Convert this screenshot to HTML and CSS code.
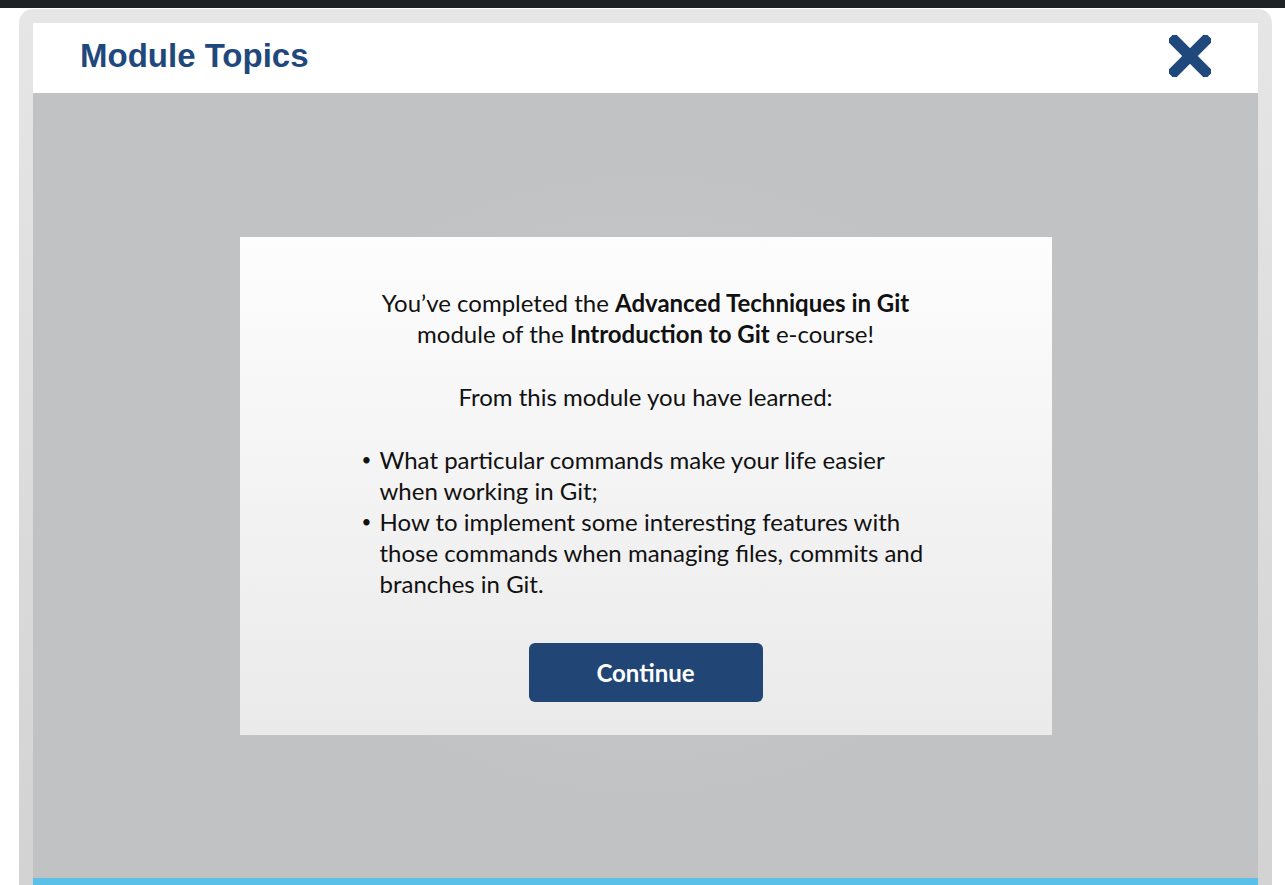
FILE: index.html
```html
<!DOCTYPE html>
<html>
<head>
<meta charset="utf-8">
<link rel="stylesheet" href="styles.css">
</head>
<body>
<div class="topbar"></div>
<div class="frame">
  <div class="panel">
    <header class="header">
      <h1 class="title">Module Topics</h1>
      <button class="close" aria-label="Close">
        <svg width="42" height="42" viewBox="0 0 44 44">
          <rect x="-6.5" y="16.2" width="57" height="11.6" rx="2.5" fill="#1f497d" transform="rotate(45 22 22)"/>
          <rect x="-6.5" y="16.2" width="57" height="11.6" rx="2.5" fill="#1f497d" transform="rotate(-45 22 22)"/>
        </svg>
      </button>
    </header>
    <main class="stage">
      <section class="dialog">
        <p class="lead">You’ve completed the <b>Advanced Techniques in Git</b><br>module of the <b>Introduction to Git</b> e-course!</p>
        <p class="lead">From this module you have learned:</p>
        <ul class="list">
          <li>What particular commands make your life easier when working in Git;</li>
          <li>How to implement some interesting features with those commands when managing files, commits and branches in Git.</li>
        </ul>
        <button class="continue">Continue</button>
      </section>
    </main>
    <div class="bottombar"></div>
  </div>
</div>
</body>
</html>
```
FILE: styles.css
```css
html, body {
  margin: 0;
  padding: 0;
  background: #ffffff;
  overflow: hidden;
  height: 885px;
}
.topbar {
  height: 8px;
  background: #202124;
}
.frame {
  margin: 1px 13px 0 19px;
  padding: 14px 14px 0 14px;
  border-radius: 14px 14px 0 0;
  background: linear-gradient(#e6e6e6, #d2d2d2);
  height: 900px;
  box-sizing: border-box;
}
.panel {
  display: flex;
  flex-direction: column;
}
.header {
  height: 70px;
  background: #ffffff;
  display: flex;
  align-items: center;
  justify-content: space-between;
  padding: 0 47px 0 47px;
}
.title {
  margin: 0;
  font-family: "Liberation Sans", Arial, sans-serif;
  font-weight: bold;
  font-size: 33px;
  color: #1f497d;
  padding-bottom: 4px;
}
.close {
  border: 0;
  background: none;
  padding: 0;
  width: 42px;
  height: 42px;
  margin-bottom: 5px;
  cursor: pointer;
}
.close svg { display: block; }
.stage {
  height: 785px;
  background: radial-gradient(ellipse 420px 340px at 50% 50%, #c7c8c9 0%, #c1c2c3 100%);
  display: flex;
  align-items: center;
  justify-content: center;
}
.dialog {
  width: 812px;
  height: 498px;
  box-sizing: border-box;
  background: linear-gradient(#fdfdfd, #eaeaea);
  display: flex;
  flex-direction: column;
  align-items: center;
  padding-top: 50px;
  font-family: Lato, "Open Sans", sans-serif;
  font-size: 24px;
  line-height: 31px;
  color: #111;
}
.lead {
  margin: 0 0 32px 0;
  text-align: center;
}
.lead b { font-weight: bold; }
.list {
  margin: 0 0 44px 0;
  padding: 0 0 0 18px;
  width: 568px;
  box-sizing: border-box;
  list-style: none;
}
.list li {
  position: relative;
}
.list li::before {
  content: "•";
  position: absolute;
  left: -18px;
  font-size: 17px;
}
.continue {
  width: 234px;
  height: 59px;
  border: 0;
  border-radius: 6px;
  background: #214575;
  color: #ffffff;
  font-family: Lato, "Open Sans", sans-serif;
  font-weight: bold;
  font-size: 24px;
  cursor: pointer;
}
.bottombar {
  height: 10px;
  background: #5bc0e8;
}
```
